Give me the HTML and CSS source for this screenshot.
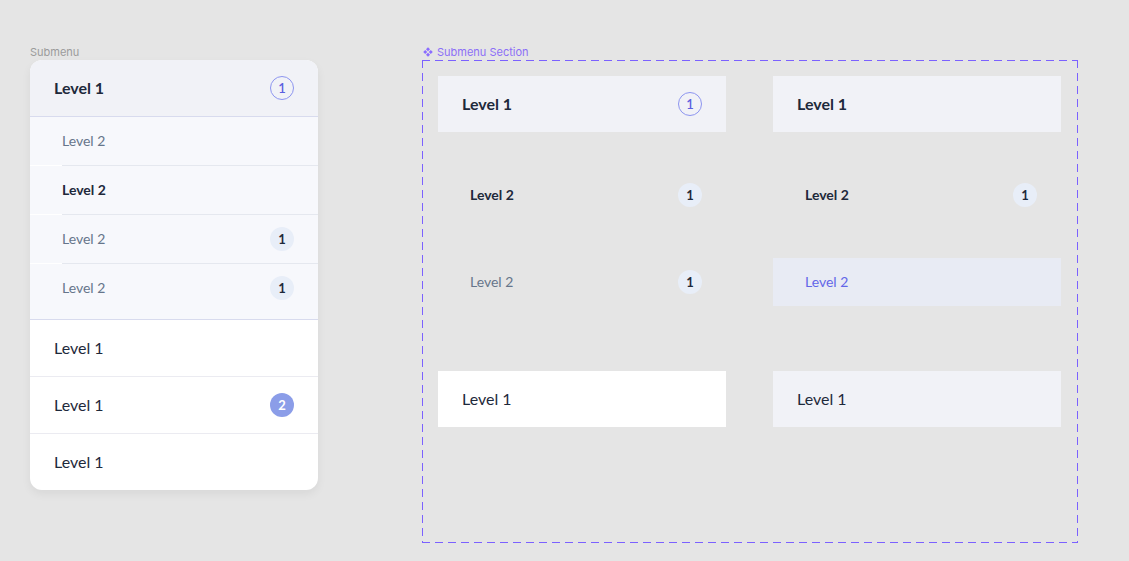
FILE: index.html
```html
<!DOCTYPE html>
<html>
<head>
<meta charset="utf-8">
<link rel="stylesheet" href="styles.css">
</head>
<body>
<div class="page">
  <div class="left">
    <div class="frame-label">Submenu</div>
    <div class="card">
      <div class="menu-head">
        <span class="t-l1b">Level 1</span>
        <span class="badge badge-outline">1</span>
      </div>
      <div class="sub">
        <div class="sub-item"><span class="t-l2">Level 2</span></div>
        <div class="sub-div"></div>
        <div class="sub-item"><span class="t-l2b">Level 2</span></div>
        <div class="sub-div"></div>
        <div class="sub-item"><span class="t-l2">Level 2</span><span class="badge badge-soft">1</span></div>
        <div class="sub-div"></div>
        <div class="sub-item"><span class="t-l2">Level 2</span><span class="badge badge-soft">1</span></div>
      </div>
      <div class="menu-item"><span class="t-l1">Level 1</span></div>
      <div class="menu-item"><span class="t-l1">Level 1</span><span class="badge badge-fill">2</span></div>
      <div class="menu-item last"><span class="t-l1">Level 1</span></div>
    </div>
  </div>
  <div class="right">
    <div class="frame-label purple">
      <svg class="comp-icon" width="10" height="10" viewBox="0 0 9 9"><path d="M4.5 0.2 L6.3 2 L4.5 3.8 L2.7 2 Z M4.5 5.2 L6.3 7 L4.5 8.8 L2.7 7 Z M2 2.7 L3.8 4.5 L2 6.3 L0.2 4.5 Z M7 2.7 L8.8 4.5 L7 6.3 L5.2 4.5 Z" fill="#8a6cff"/></svg>
      Submenu Section
    </div>
    <div class="section">
      <div class="s-head"><span class="t-l1b">Level 1</span><span class="badge badge-outline">1</span></div>
      <div class="s-head"><span class="t-l1b">Level 1</span></div>
      <div class="s-sub"><span class="t-l2b">Level 2</span><span class="badge badge-soft">1</span></div>
      <div class="s-sub"><span class="t-l2b">Level 2</span><span class="badge badge-soft">1</span></div>
      <div class="s-sub"><span class="t-l2">Level 2</span><span class="badge badge-soft">1</span></div>
      <div class="s-sub active"><span class="t-l2 t-active">Level 2</span></div>
      <div class="s-item white"><span class="t-l1">Level 1</span></div>
      <div class="s-item grey"><span class="t-l1">Level 1</span></div>
    </div>
  </div>
</div>
</body>
</html>
```

FILE: styles.css
```css
* { box-sizing: border-box; }
html, body { margin: 0; padding: 0; }
body {
  background: #e5e5e5;
  font-family: "Lato", "Liberation Sans", sans-serif;
  color: #1e293b;
}
.page {
  display: flex;
  align-items: flex-start;
  padding: 45px 0 0 30px;
  gap: 104px;
}
.frame-label {
  font-family: "Inter", "Liberation Sans", sans-serif;
  font-size: 11px;
  line-height: 14px;
  height: 14px;
  margin-bottom: 1px;
  color: #9b9b9b;
  display: flex;
  align-items: center;
  gap: 4px;
}
.frame-label.purple { color: #8c6ff7; margin-left: 1px; }
.comp-icon { display: block; }

.card {
  width: 288px;
  background: #fff;
  border-radius: 12px;
  overflow: hidden;
  box-shadow: 0 4px 10px rgba(0,0,0,0.06);
}
.menu-head {
  height: 57px;
  padding: 0 24px;
  display: flex;
  align-items: center;
  justify-content: space-between;
  background: #f1f2f7;
  border-bottom: 1px solid #d8dbee;
}
.sub {
  background: #f7f8fc;
  padding-bottom: 7px;
  border-bottom: 1px solid #d8dbee;
}
.sub-item {
  height: 48px;
  padding: 0 24px 0 32px;
  display: flex;
  align-items: center;
  justify-content: space-between;
}
.sub-div {
  height: 1px;
  background: linear-gradient(90deg, #ffffff 32px, #e5e8ef 32px);
}
.menu-item {
  height: 57px;
  padding: 0 24px;
  display: flex;
  align-items: center;
  justify-content: space-between;
  border-bottom: 1px solid #ebebf1;
}
.menu-item.last { height: 56px; border-bottom: none; }

.t-l1b, .t-l1, .t-l2, .t-l2b {
  display: block;
  line-height: 20px;
}
.t-l1b { font-size: 16px; font-weight: 700; color: #1e293b; }
.t-l1 { font-size: 16px; font-weight: 400; color: #1e293b; }
.t-l2 { font-size: 14px; font-weight: 400; color: #66758b; }
.t-l2b { font-size: 14px; font-weight: 700; color: #1e293b; }
.t-active { color: #6366e8; }

.badge {
  width: 24px;
  height: 24px;
  border-radius: 50%;
  display: flex;
  align-items: center;
  justify-content: center;
  font-size: 13px;
  font-weight: 700;
  flex: none;
}
.badge-outline {
  border: 1px solid #8d95f0;
  color: #5b5fe0;
  font-weight: 600;
}
.badge-soft { background: #e8eef8; color: #1e293b; }
.badge-fill { background: #8b9de8; color: #fff; }

.section {
  width: 656px;
  height: 483px;
  padding: 16px 16px 0 16px;
  background:
    repeating-linear-gradient(90deg, #7b61ff 0 8px, transparent 8px 13px) top left / 100% 1px no-repeat,
    repeating-linear-gradient(90deg, #7b61ff 0 8px, transparent 8px 13px) bottom left / 100% 1px no-repeat,
    repeating-linear-gradient(180deg, #7b61ff 0 8px, transparent 8px 13px) top left / 1px 100% no-repeat,
    repeating-linear-gradient(180deg, #7b61ff 0 8px, transparent 8px 13px) top right / 1px 100% no-repeat;
  display: grid;
  grid-template-columns: 288px 288px;
  grid-template-rows: 56px 48px 48px 56px;
  column-gap: 47px;
  row-gap: 39px;
  align-content: start;
}
.s-head, .s-item {
  padding: 0 24px;
  display: flex;
  align-items: center;
  justify-content: space-between;
  background: #f1f2f7;
}
.s-sub {
  padding: 0 24px 0 32px;
  display: flex;
  align-items: center;
  justify-content: space-between;
}
.s-sub.active { background: #e8ebf4; }
.s-item { margin-top: 26px; height: 56px; }
.s-item.white { background: #fff; }
.s-item.grey { background: #f1f2f7; }
```
